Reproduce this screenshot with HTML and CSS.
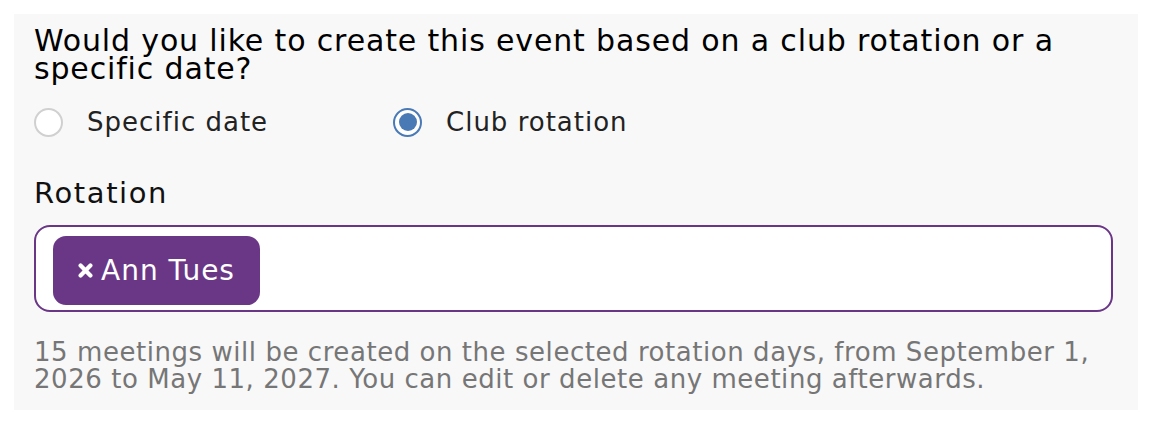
FILE: index.html
```html
<!DOCTYPE html>
<html lang="en">
<head>
<meta charset="utf-8">
<title>Create event</title>
<link rel="stylesheet" href="styles.css">
</head>
<body>
<section class="panel">
  <p class="question">Would you like to create this event based on a club rotation or a specific date?</p>
  <div class="radios">
    <label class="option">
      <span class="radio"></span>
      <span class="option-text">Specific date</span>
    </label>
    <label class="option">
      <span class="radio radio-checked"><span class="dot"></span></span>
      <span class="option-text">Club rotation</span>
    </label>
  </div>
  <h3 class="field-label">Rotation</h3>
  <div class="select-box">
    <span class="chip">
      <svg class="chip-x" width="15" height="15" viewBox="0 0 15 15" aria-hidden="true"><path d="M2.6 2.6 L12.4 12.4 M12.4 2.6 L2.6 12.4" stroke="#ffffff" stroke-width="4.2" stroke-linecap="round"/></svg>
      <span class="chip-text">Ann Tues</span>
    </span>
  </div>
  <p class="helper">15 meetings will be created on the selected rotation days, from September 1, 2026 to May 11, 2027. You can edit or delete any meeting afterwards.</p>
</section>
</body>
</html>
```

FILE: styles.css
```css
html, body {
  margin: 0;
  padding: 0;
  background: #ffffff;
}

body {
  font-family: "DejaVu Sans", "Open Sans", sans-serif;
  padding: 14px 14px 0 14px;
}

.panel {
  background: #f8f8f8;
  width: 1124px;
  height: 396px;
  box-sizing: border-box;
  padding: 13px 25px 0 20px;
}

.question {
  margin: 0;
  font-size: 30px;
  line-height: 28px;
  letter-spacing: 0.85px;
  color: #000000;
  font-weight: 400;
}

.radios {
  display: flex;
  margin-top: 24px;
  height: 30px;
  align-items: center;
}

.option {
  display: flex;
  align-items: center;
  width: 359px;
}

.radio {
  width: 29px;
  height: 29px;
  box-sizing: border-box;
  border: 2px solid #d0d0d0;
  border-radius: 50%;
  background: #ffffff;
  display: flex;
  align-items: center;
  justify-content: center;
  flex: none;
}

.radio-checked {
  border-color: #4a7ab6;
}

.dot {
  width: 18px;
  height: 18px;
  border-radius: 50%;
  background: #4a7ab6;
}

.option-text {
  margin-left: 24px;
  font-size: 26px;
  letter-spacing: 1px;
  color: #222222;
}

.field-label {
  margin: 42px 0 0 0;
  font-size: 29px;
  line-height: 28px;
  letter-spacing: 1.6px;
  font-weight: 400;
  color: #111111;
}

.select-box {
  margin-top: 18px;
  height: 87px;
  box-sizing: border-box;
  border: 2px solid #6a3787;
  border-radius: 16px;
  background: #ffffff;
  padding: 9px 17px 5px 17px;
  display: flex;
  align-items: flex-start;
}

.chip {
  display: flex;
  align-items: center;
  height: 69px;
  box-sizing: border-box;
  padding: 0 25px;
  background: #6a3787;
  border-radius: 13px;
  color: #ffffff;
}

.chip-x {
  display: block;
  margin-right: 8px;
  flex: none;
}

.chip-text {
  font-size: 28px;
  letter-spacing: 1px;
}

.helper {
  margin: 27px 0 0 0;
  font-size: 26px;
  line-height: 27px;
  letter-spacing: 0.55px;
  color: #767676;
}
```
